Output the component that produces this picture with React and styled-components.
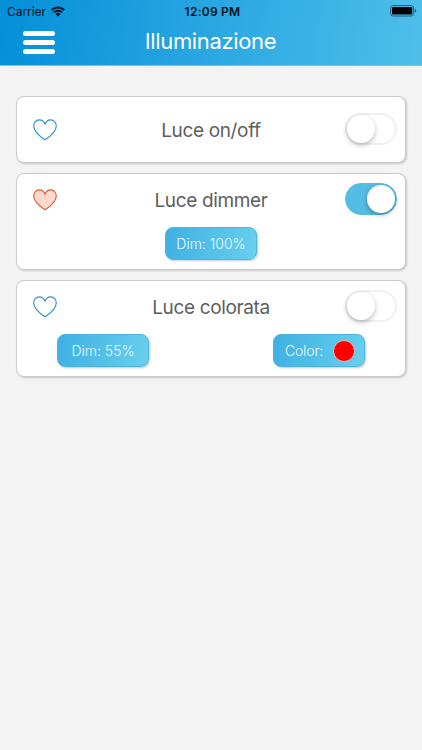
import React, { useState } from 'react';
import styled, { createGlobalStyle } from 'styled-components';

const GlobalStyle = createGlobalStyle`
    * {
        box-sizing: border-box;
    }

    body {
        margin: 0;
        background: #f3f3f3;
        font-family: Inter, "Liberation Sans", sans-serif;
    }
`;

const WifiIcon = () => (
    <svg width="14" height="11" viewBox="0 0 14 11">
        <path d="M0 3.3 A10 10 0 0 1 14 3.3 L12.6 4.8 A8 8 0 0 0 1.4 4.8 Z" fill="#05121a" />
        <path d="M2.2 5.6 A6.9 6.9 0 0 1 11.8 5.6 L10.4 7.1 A4.9 4.9 0 0 0 3.6 7.1 Z" fill="#05121a" />
        <path d="M4.5 8 A3.6 3.6 0 0 1 9.5 8 L7 10.6 Z" fill="#05121a" />
    </svg>
);

const BatteryIcon = () => (
    <svg width="27" height="12" viewBox="0 0 27 12">
        <rect x="0.6" y="0.6" width="23" height="10.4" rx="2.4" fill="none" stroke="#1d5f7b" strokeWidth="1" />
        <rect x="2" y="2" width="20.2" height="7.6" rx="1" fill="#000" />
        <path d="M24.8 4 C26.8 4.4 26.8 7.2 24.8 7.6 Z" fill="#1d5f7b" />
    </svg>
);

const HeartIcon = ({ active }) => (
    <svg width="24" height="22" viewBox="0 0 24 22">
        <path
            d="M12 5.2 C11 2.4 9 0.8 6.4 0.8 C3.2 0.8 0.7 3.4 0.7 6.8 C0.7 12.4 5.8 16.8 12 20.8 C18.2 16.8 23.3 12.4 23.3 6.8 C23.3 3.4 20.8 0.8 17.6 0.8 C15 0.8 13 2.4 12 5.2 Z"
            fill={active ? '#ffd8cf' : 'none'}
            stroke={active ? '#d9603f' : '#2c92cc'}
            strokeWidth="1.15"
            strokeLinejoin="round"
        />
    </svg>
);

const Device = ({ name, favorite, initial, children }) => {
    const [on, setOn] = useState(initial);

    return <Card $single={!children}>
               <CardRow>
                   <HeartIcon active={favorite} />
                   <DeviceName>{name}</DeviceName>
                   <Switch role="switch" aria-checked={on} $on={on} onClick={() => setOn(!on)}>
                       <Knob />
                   </Switch>
               </CardRow>
               {children}
           </Card>
}

const App = () => {
    return <>
               <GlobalStyle />
               <Header>
                   <StatusBar>
                       <Carrier>Carrier <WifiIcon /></Carrier>
                       <Clock>12:09 PM</Clock>
                       <Battery><BatteryIcon /></Battery>
                   </StatusBar>
                   <NavBar>
                       <Menu><span /><span /><span /></Menu>
                       <Title>Illuminazione</Title>
                   </NavBar>
               </Header>
               <List>
                   <Device name="Luce on/off" initial={false} />
                   <Device name="Luce dimmer" favorite initial={true}>
                       <Actions>
                           <Action>Dim: 100%</Action>
                       </Actions>
                   </Device>
                   <Device name="Luce colorata" initial={false}>
                       <Actions $split>
                           <Action>Dim: 55%</Action>
                           <Action>Color: <Swatch /></Action>
                       </Actions>
                   </Device>
               </List>
           </>
}

export default App;

const Header = styled.header`
    height: 66px;
    background: linear-gradient(100deg, #048fd9 0%, #4fbfea 100%);
    border-bottom: 1px solid #7fc0e0;
`;

const StatusBar = styled.div`
    height: 22px;
    display: grid;
    grid-template-columns: 1fr auto 1fr;
    align-items: center;
    padding: 0 5px 0 7px;
    color: #05121a;
    font-size: 12px;
`;

const Carrier = styled.div`
    display: flex;
    align-items: center;
    gap: 5px;
    letter-spacing: -0.05px;
`;

const Clock = styled.div`
    padding-left: 1px;
    font-weight: 600;
    letter-spacing: 0.25px;
`;

const Battery = styled.div`
    display: flex;
    justify-content: flex-end;
`;

const NavBar = styled.div`
    height: 41px;
    display: grid;
    grid-template-columns: 32px 1fr 32px;
    align-items: center;
    padding: 0 22px 0 23px;
`;

const Menu = styled.button`
    display: grid;
    gap: 4px;
    margin: 0;
    padding: 0;
    border: 0;
    background: none;

    & span {
        height: 5px;
        border-radius: 3px;
        background: #fff;
    }
`;

const Title = styled.h1`
    margin: 0;
    padding: 0 2px 3px 0;
    text-align: center;
    color: #fff;
    font-size: 22px;
    line-height: 28px;
    font-weight: 400;
    letter-spacing: -0.35px;
`;

const List = styled.main`
    display: grid;
    gap: 10px;
    padding: 30px 16px;
`;

const Card = styled.section`
    height: ${props => props.$single ? '67px' : '97px'};
    padding: ${props => props.$single ? '16px' : '9px'} 8px 0 16px;
    border: 1px solid #cbcbcb;
    border-radius: 8px;
    background: #fff;
    box-shadow: 1px 1px 2px rgba(0, 0, 0, 0.18);
`;

const CardRow = styled.div`
    height: 33px;
    display: grid;
    grid-template-columns: 44px 1fr 52px;
    align-items: center;
`;

const DeviceName = styled.div`
    padding-top: 2px;
    text-align: center;
    color: #5e5e5e;
    font-size: 19px;
    line-height: 24px;
    letter-spacing: -0.35px;
`;

const Switch = styled.button`
    width: 52px;
    height: 32px;
    margin-bottom: 1px;
    display: flex;
    align-items: center;
    justify-content: ${props => props.$on ? 'flex-end' : 'flex-start'};
    padding: 0 ${props => props.$on ? '1px 0 0' : '0'};
    border: ${props => props.$on ? '1px solid #55bce4' : '2px solid #f0f0f4'};
    border-radius: 16px;
    background: ${props => props.$on ? '#55bce4' : '#fff'};
`;

const Knob = styled.span`
    width: 28px;
    height: 28px;
    flex: none;
    border-radius: 50%;
    background: #fff;
    box-shadow: 0 2px 5px rgba(0, 0, 0, 0.28);
`;

const Actions = styled.div`
    display: flex;
    justify-content: ${props => props.$split ? 'space-between' : 'center'};
    padding: 11px 32px 0 24px;
`;

const Action = styled.button`
    width: 92px;
    height: 33px;
    display: flex;
    align-items: center;
    justify-content: center;
    gap: 10px;
    padding: 0;
    border: 1px solid #4fb2da;
    border-radius: 8px;
    background: linear-gradient(100deg, #3eb0e2, #68d0ee);
    box-shadow: 1px 1px 2px rgba(0, 60, 100, 0.25);
    color: #e6f8ff;
    font-family: inherit;
    font-size: 14px;
    font-weight: 300;

    &:last-child:not(:first-child) {
        padding-left: 2px;
        letter-spacing: -0.15px;
    }
`;

const Swatch = styled.span`
    width: 22px;
    height: 22px;
    border: 1px solid #f6b5b5;
    border-radius: 50%;
    background: #f00;
`;
